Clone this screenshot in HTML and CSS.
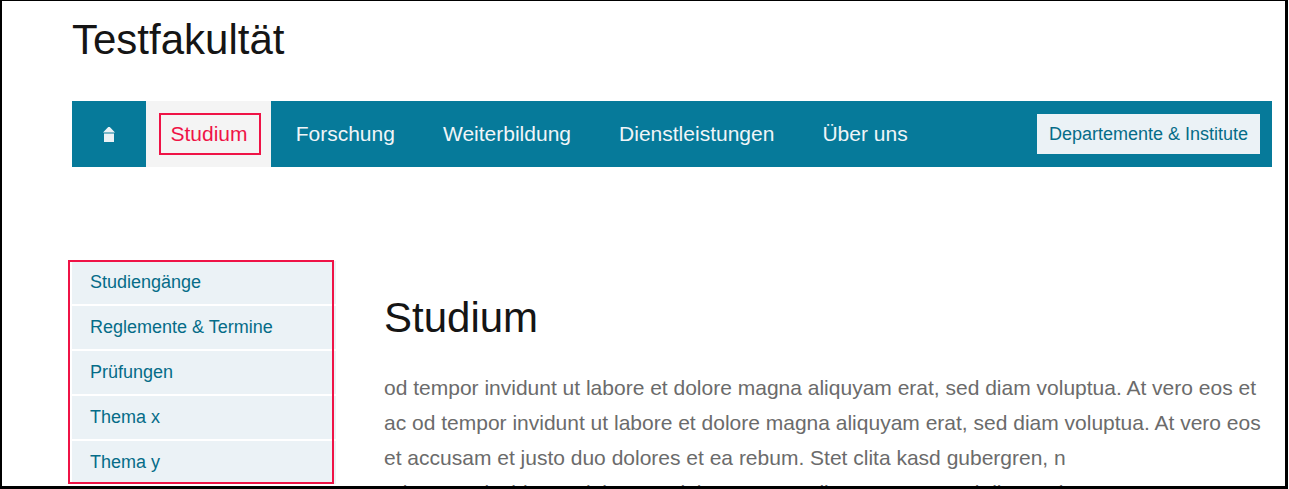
FILE: index.html
```html
<!DOCTYPE html>
<html lang="de">
<head>
  <meta charset="UTF-8" />
  <title>Testfakultät – Studium</title>
  <link rel="stylesheet" href="styles.css">
</head>
<body>

<div class="frame">
  <header class="site-header">
    <div class="site-title">Testfakultät</div>
  </header>

  <nav class="main-nav">
    <a class="home-link" href="#" aria-label="Home">
      <svg width="12" height="15" viewBox="0 0 12 15"><path d="M5.2 0H6.8L12 5.5H0Z M1 6.5H11V15H1Z" fill="#eaf1f5"/></svg>
    </a>
    <div class="active-tab"><a href="#">Studium</a></div>
    <a class="nav-link" href="#">Forschung</a>
    <a class="nav-link" href="#">Weiterbildung</a>
    <a class="nav-link" href="#">Dienstleistungen</a>
    <a class="nav-link" href="#">Über uns</a>
    <a class="dept-btn" href="#">Departemente &amp; Institute</a>
  </nav>

  <div class="content">
    <ul class="side-nav">
      <li><a href="#">Studiengänge</a></li>
      <li><a href="#">Reglemente &amp; Termine</a></li>
      <li><a href="#">Prüfungen</a></li>
      <li><a href="#">Thema x</a></li>
      <li><a href="#">Thema y</a></li>
    </ul>
    <main class="main-text">
      <h1>Studium</h1>
      <p>od tempor invidunt ut labore et dolore magna aliquyam erat, sed diam voluptua. At vero eos et<br>
      ac od tempor invidunt ut labore et dolore magna aliquyam erat, sed diam voluptua. At vero eos<br>
      et accusam et justo duo dolores et ea rebum. Stet clita kasd gubergren, n<br>
      od tempor invidunt ut labore et dolore magna aliquyam erat, sed diam voluptua. At vero eos et</p>
    </main>
  </div>
</div>

</body>
</html>
```

FILE: styles.css
```css
* {
  margin: 0;
  padding: 0;
  box-sizing: border-box;
}

html, body {
  height: 489px;
  overflow: hidden;
  background-color: #fff;
}

body {
  font-family: 'Liberation Sans', Arial, sans-serif;
  color: #111;
}

a {
  text-decoration: none;
}

.frame {
  width: 1288px;
  height: 489px;
  overflow: hidden;
  border-style: solid;
  border-color: #000;
  border-width: 1px 3px 3px 2px;
  padding-left: 70px;
}

.site-header {
  height: 100px;
  padding-top: 14px;
}

.site-title {
  font-size: 42px;
  line-height: 50px;
  color: #151515;
}

.main-nav {
  display: flex;
  align-items: center;
  width: 1200px;
  height: 66px;
  background-color: #067a9a;
  font-size: 21px;
}

.home-link {
  display: flex;
  align-items: center;
  justify-content: center;
  width: 74px;
  height: 100%;
}

.active-tab {
  display: flex;
  align-items: center;
  width: 125px;
  height: 100%;
  padding-left: 13px;
  background-color: #f4f4f4;
}

.active-tab a {
  width: 102px;
  height: 42px;
  padding-right: 2px;
  line-height: 38px;
  text-align: center;
  color: #ef1346;
  border: 2px solid #ef1346;
}

.nav-link {
  margin-left: 24.7px;
  margin-right: 23.4px;
  color: #f0f5f8;
}

.dept-btn {
  margin-left: auto;
  margin-right: 12px;
  height: 40px;
  padding: 0 12px;
  line-height: 40px;
  font-size: 18px;
  color: #056c88;
  background-color: #ebf2f6;
}

.content {
  display: flex;
  align-items: flex-start;
  padding-top: 94px;
}

.side-nav {
  position: relative;
  flex: none;
  width: 264px;
  list-style: none;
}

/* red highlight box lies over the list */
.side-nav::after {
  content: "";
  position: absolute;
  top: -1px;
  bottom: 0;
  left: -4px;
  right: 2px;
  border: 2px solid #ef1346;
}

.side-nav li {
  height: 43px;
  margin-bottom: 2px;
  background-color: #ebf2f6;
}

.side-nav li:last-child {
  margin-bottom: 0;
}

.side-nav a {
  display: block;
  padding-left: 18px;
  line-height: 42px;
  font-size: 18px;
  color: #056c88;
}

.main-text {
  width: 890px;
  margin-left: 48px;
  padding-top: 32px;
}

.main-text h1 {
  font-size: 42px;
  font-weight: normal;
  line-height: 50px;
  color: #151515;
  margin-bottom: 27px;
}

.main-text p {
  font-size: 21px;
  line-height: 35px;
  color: #6b6b6b;
  white-space: nowrap;
}
```
